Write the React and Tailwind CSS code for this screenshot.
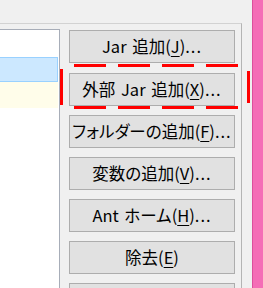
import React from 'react';

const font = { fontFamily: '"Noto Sans CJK JP", "Noto Sans", sans-serif' };

function Btn({ children, className = '' }) {
  return (
    <div
      className={`h-[33px] w-[166px] shrink-0 flex items-center justify-center bg-[#e1e1e1] border border-[#adadad] text-[16.5px] text-black leading-none whitespace-nowrap [word-spacing:2px] [font-feature-settings:'palt'] ${className}`}
    >
      {children}
    </div>
  );
}

const U = ({ children }) => <span className="underline underline-offset-[3px] decoration-1">{children}</span>;
const Dots = () => <span className="tracking-[1px]">...</span>;

export default function App() {
  return (
    <div className="relative w-[263px] h-[288px] overflow-hidden bg-[#f0f0f0] flex" style={font}>
      {/* main panel */}
      <div className="w-[242px] h-full pt-[23px] shrink-0">
        <div className="h-full border-t border-r border-t-[#d2d2d2] border-r-[#b4b4b4] flex pt-[5px]">
          {/* list box */}
          <div className="w-[60px] h-full shrink-0 bg-white border-t border-r border-[#a7adb8]">
            <div className="h-[27px]" />
            <div className="h-[25px] w-[58px] bg-[#cce8ff] border border-l-0 border-[#99d1ff]" />
            <div className="h-[26px] w-[58px] bg-[#fffdea]" />
          </div>

          {/* buttons */}
          <div className="ml-[9px] flex flex-col gap-[9px] pt-[1px]">
            <Btn className="mb-[1px]">Jar 追加(<U>J</U>)<Dots /></Btn>
            <Btn>外部 Jar 追加(<U>X</U>)<Dots /></Btn>
            <Btn>フォルダーの追加(<U>F</U>)<Dots /></Btn>
            <Btn>変数の追加(<U>V</U>)<Dots /></Btn>
            <Btn>Ant ホーム(<U>H</U>)<Dots /></Btn>
            <Btn>除去(<U>E</U>)</Btn>
            <Btn> </Btn>
          </div>
        </div>
      </div>

      <div className="w-[10px] shrink-0" />
      {/* pink side bar */}
      <div className="w-[11px] h-full shrink-0 bg-[#f46db6] border-l border-[#dc4f9c]" />

      {/* red dashed highlight */}
      <svg className="absolute inset-0 pointer-events-none" width="263" height="288">
        <line x1="74" y1="65.5" x2="240" y2="65.5" stroke="#ff0000" strokeWidth="3" strokeDasharray="32 12" />
        <line x1="74" y1="107.5" x2="240" y2="107.5" stroke="#ff0000" strokeWidth="3" strokeDasharray="32 12" />
        <line x1="61.5" y1="69" x2="61.5" y2="105" stroke="#ff0000" strokeWidth="3" />
        <line x1="248.5" y1="71" x2="248.5" y2="103" stroke="#ff0000" strokeWidth="3" />
      </svg>
    </div>
  );
}
